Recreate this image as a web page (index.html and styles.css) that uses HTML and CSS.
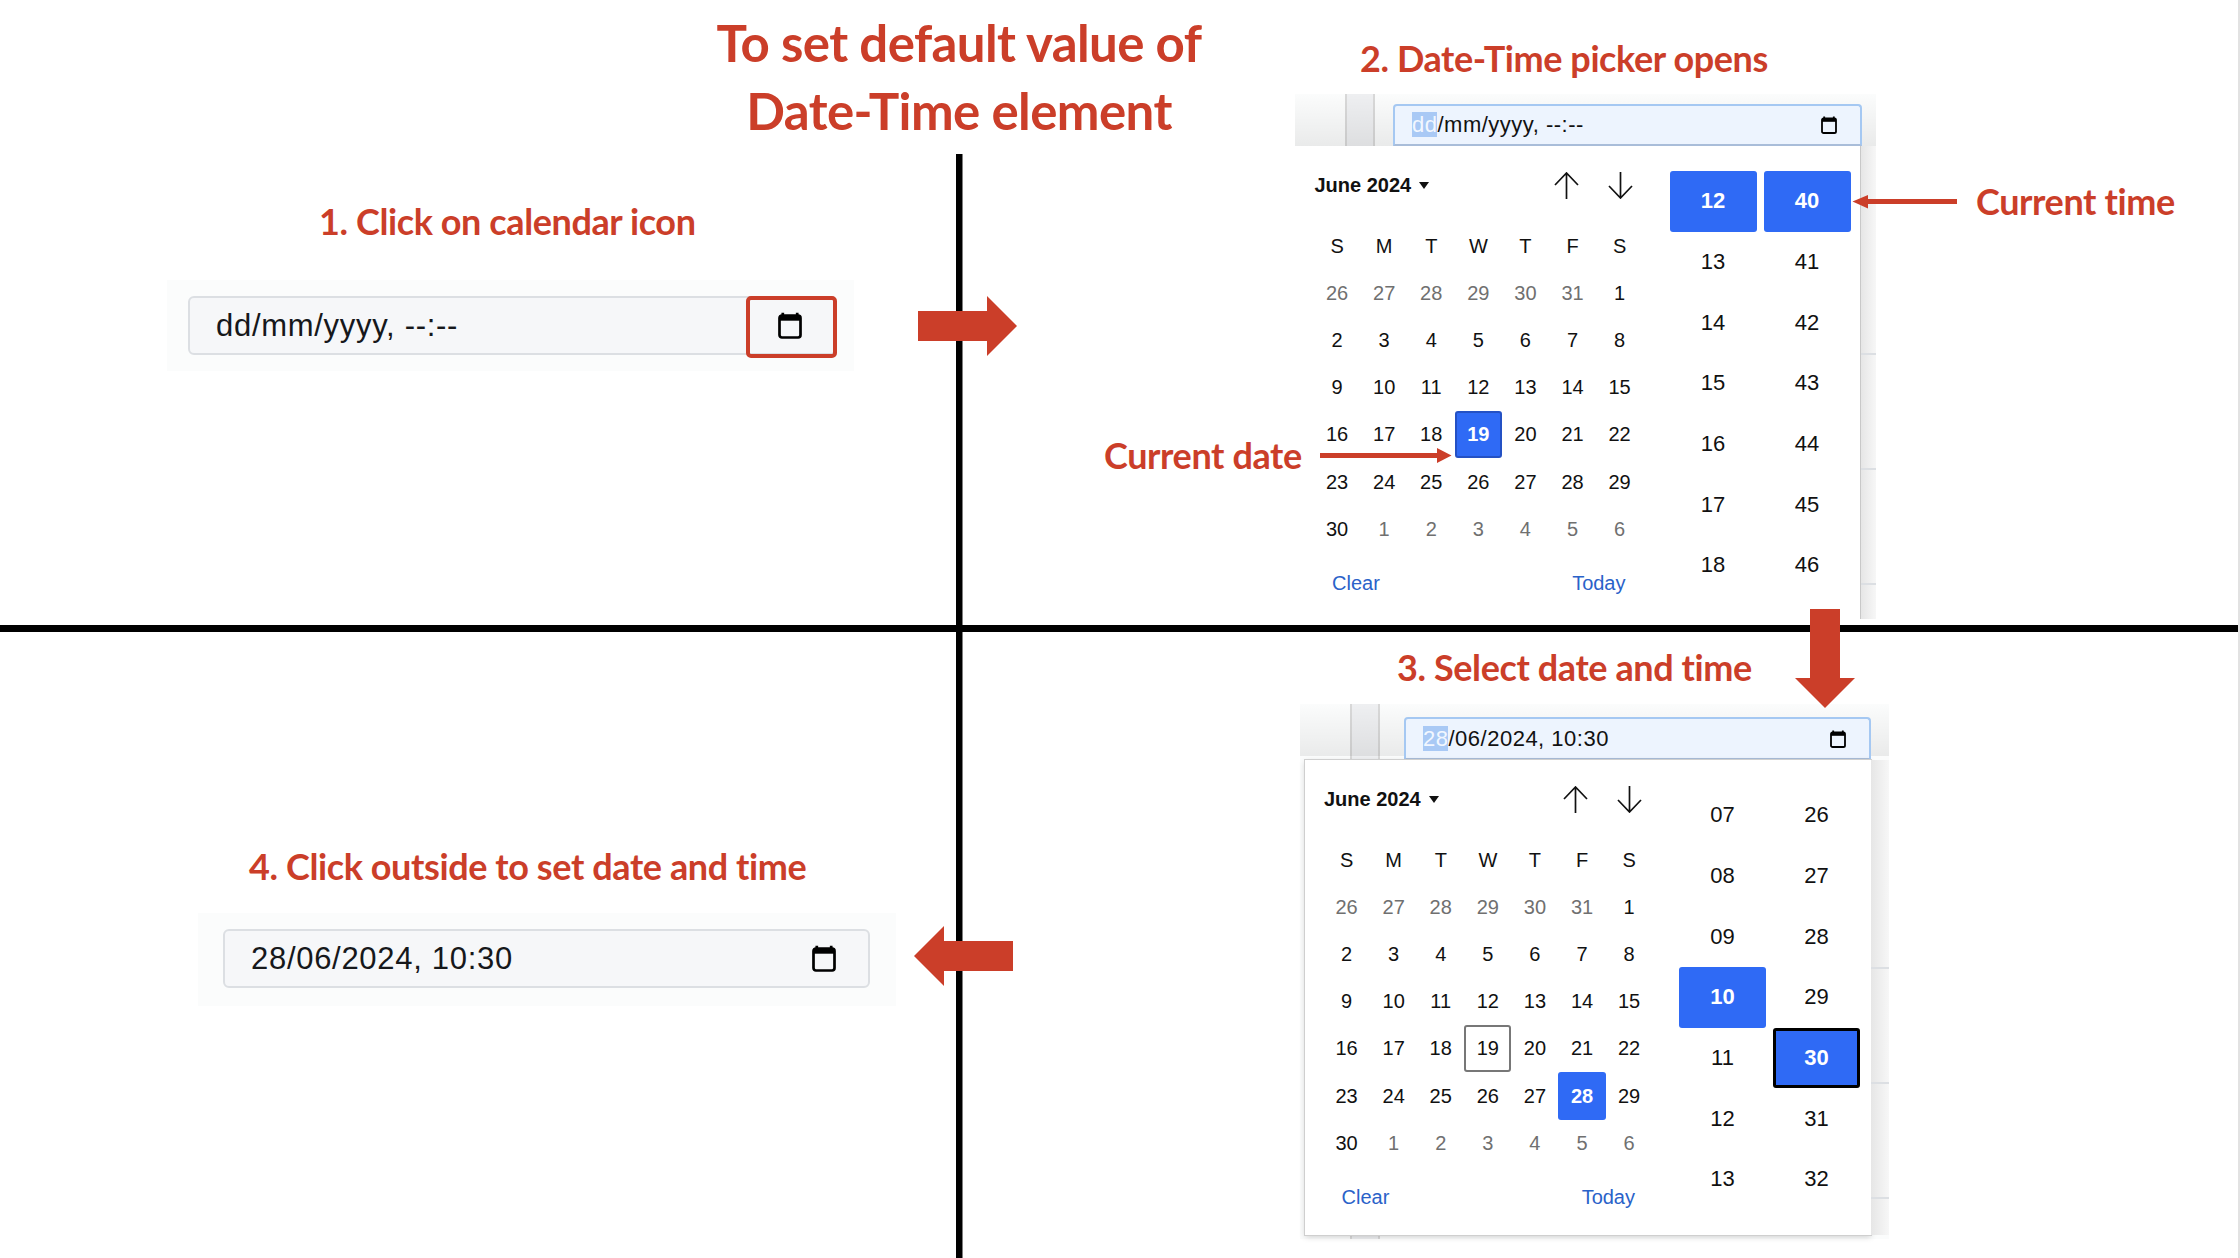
FILE: index.html
```html
<!DOCTYPE html>
<html lang="en">
<head>
    <meta charset="UTF-8">
    <title>To set default value of Date-Time element</title>
    <meta name="viewport" content="width=device-width, initial-scale=1.0">
    <link rel="stylesheet" href="styles.css">
</head>
<body>
<svg class="defs" width="0" height="0">
    <symbol id="cal" viewBox="0 0 16 18">
        <path d="M3.2 0.5v3M12.8 0.5v3" stroke="currentColor" stroke-width="1.8" fill="none"/>
        <rect x="1" y="2.4" width="14" height="14.6" rx="1.6" stroke="currentColor" stroke-width="1.8" fill="none"/>
        <rect x="1" y="2.4" width="14" height="3.4" fill="currentColor"/>
    </symbol>
    <symbol id="up" viewBox="0 0 25 27">
        <path d="M12.5 27V1M1 13L12.5 1L24 13" stroke="currentColor" stroke-width="1.7" fill="none"/>
    </symbol>
    <symbol id="down" viewBox="0 0 25 27">
        <path d="M12.5 0V26M1 14L12.5 26L24 14" stroke="currentColor" stroke-width="1.7" fill="none"/>
    </symbol>
</svg>

<main class="slide">
    <h1 class="title">To set default value of<br>Date-Time element</h1>

    <!-- step 1 -->
    <h2 class="label step-1">1. Click on calendar icon</h2>
    <div class="field-wrap wrap-1">
        <div class="field">
            <span class="field-text">dd/mm/yyyy, --:--</span>
            <svg class="field-icon"><use href="#cal"/></svg>
        </div>
        <div class="icon-mark"></div>
    </div>

    <!-- step 2 -->
    <h2 class="label step-2">2. Date-Time picker opens</h2>
    <div class="shot shot-1">
        <div class="date-input">
            <span><span class="sel">dd</span>/mm/yyyy, --:--</span>
            <svg class="input-icon"><use href="#cal"/></svg>
        </div>
        <div class="shot-row">
            <div class="picker">
                <div class="cal">
                    <div class="cal-head">
                        <span class="month">June 2024<i class="caret"></i></span>
                        <svg class="nav"><use href="#up"/></svg>
                        <svg class="nav"><use href="#down"/></svg>
                    </div>
                    <div class="days">
                        <b>S</b><b>M</b><b>T</b><b>W</b><b>T</b><b>F</b><b>S</b>
                        <span class="off">26</span><span class="off">27</span><span class="off">28</span><span class="off">29</span><span class="off">30</span><span class="off">31</span><span>1</span>
                        <span>2</span><span>3</span><span>4</span><span>5</span><span>6</span><span>7</span><span>8</span>
                        <span>9</span><span>10</span><span>11</span><span>12</span><span>13</span><span>14</span><span>15</span>
                        <span>16</span><span>17</span><span>18</span><span class="today-focus">19</span><span>20</span><span>21</span><span>22</span>
                        <span>23</span><span>24</span><span>25</span><span>26</span><span>27</span><span>28</span><span>29</span>
                        <span>30</span><span class="off">1</span><span class="off">2</span><span class="off">3</span><span class="off">4</span><span class="off">5</span><span class="off">6</span>
                    </div>
                    <div class="cal-foot"><a>Clear</a><a>Today</a></div>
                </div>
                <div class="times">
                    <span class="on">12</span><span class="on">40</span>
                    <span>13</span><span>41</span>
                    <span>14</span><span>42</span>
                    <span>15</span><span>43</span>
                    <span>16</span><span>44</span>
                    <span>17</span><span>45</span>
                    <span>18</span><span>46</span>
                </div>
            </div>
            <div class="strip"></div>
        </div>
    </div>
    <h2 class="label note-time">Current time</h2>
    <h2 class="label note-date">Current date</h2>

    <!-- step 3 -->
    <h2 class="label step-3">3. Select date and time</h2>
    <div class="shot shot-2">
        <div class="date-input">
            <span><span class="sel">28</span>/06/2024, 10:30</span>
            <svg class="input-icon"><use href="#cal"/></svg>
        </div>
        <div class="shot-row">
            <div class="picker">
                <div class="cal">
                    <div class="cal-head">
                        <span class="month">June 2024<i class="caret"></i></span>
                        <svg class="nav"><use href="#up"/></svg>
                        <svg class="nav"><use href="#down"/></svg>
                    </div>
                    <div class="days">
                        <b>S</b><b>M</b><b>T</b><b>W</b><b>T</b><b>F</b><b>S</b>
                        <span class="off">26</span><span class="off">27</span><span class="off">28</span><span class="off">29</span><span class="off">30</span><span class="off">31</span><span>1</span>
                        <span>2</span><span>3</span><span>4</span><span>5</span><span>6</span><span>7</span><span>8</span>
                        <span>9</span><span>10</span><span>11</span><span>12</span><span>13</span><span>14</span><span>15</span>
                        <span>16</span><span>17</span><span>18</span><span class="today">19</span><span>20</span><span>21</span><span>22</span>
                        <span>23</span><span>24</span><span>25</span><span>26</span><span>27</span><span class="picked">28</span><span>29</span>
                        <span>30</span><span class="off">1</span><span class="off">2</span><span class="off">3</span><span class="off">4</span><span class="off">5</span><span class="off">6</span>
                    </div>
                    <div class="cal-foot"><a>Clear</a><a>Today</a></div>
                </div>
                <div class="times">
                    <span>07</span><span>26</span>
                    <span>08</span><span>27</span>
                    <span>09</span><span>28</span>
                    <span class="on">10</span><span>29</span>
                    <span>11</span><span class="on focus">30</span>
                    <span>12</span><span>31</span>
                    <span>13</span><span>32</span>
                </div>
            </div>
            <div class="strip"></div>
        </div>
    </div>

    <!-- step 4 -->
    <h2 class="label step-4">4. Click outside to set date and time</h2>
    <div class="field-wrap wrap-4">
        <div class="field">
            <span class="field-text">28/06/2024, 10:30</span>
            <svg class="field-icon"><use href="#cal"/></svg>
        </div>
    </div>

    <!-- divider lines and red arrows drawn over everything -->
    <svg class="marks" viewBox="0 0 2240 1258">
        <rect class="ink" x="956" y="154" width="6.5" height="1104"/>
        <rect class="ink" x="0" y="625" width="2240" height="7"/>
        <polygon class="red" points="918,311 987,311 987,296 1017,326 987,356 987,341 918,341"/>
        <polygon class="red" points="1013,941 944,941 944,926 914,956 944,986 944,971 1013,971"/>
        <polygon class="red" points="1810,609 1840,609 1840,678 1855,678 1825,708 1795,678 1810,678"/>
        <polygon class="red" points="1957,199 1868,199 1868,195 1852.5,201.5 1868,208.5 1868,204 1957,204"/>
        <polygon class="red" points="1320,453 1437,453 1437,448 1451.5,455.5 1437,463 1437,458 1320,458"/>
    </svg>
    <div class="edge"></div>
</main>
</body>
</html>
```

FILE: styles.css
```css
* {
    box-sizing: border-box;
}
body {
    margin: 0;
    background: #fff;
    font-family: "Liberation Sans", Arial, sans-serif;
    color: #111;
}
.defs {
    position: absolute;
}
.slide {
    position: relative;
    width: 2240px;
    height: 1258px;
    overflow: hidden;
}
.marks {
    position: absolute;
    left: 0;
    top: 0;
    width: 2240px;
    height: 1258px;
}
.ink {
    fill: #000;
}
.red {
    fill: #cb3e29;
}
.edge {
    position: absolute;
    right: 0;
    top: 0;
    width: 2px;
    height: 100%;
    background: #e2e2e2;
}

/* headings */
.title {
    position: absolute;
    left: 559px;
    top: 9px;
    width: 800px;
    margin: 0;
    text-align: center;
    font: 700 51px/68px Lato, "Open Sans", sans-serif;
    letter-spacing: -0.6px;
    color: #cb3e29;
}
.label {
    position: absolute;
    margin: 0;
    white-space: nowrap;
    font: 700 36px/44px Lato, "Open Sans", sans-serif;
    letter-spacing: -0.4px;
    color: #cb3e29;
}
.step-1 { left: 319px; top: 199px; }
.step-2 { left: 1360px; top: 36px; }
.step-3 { left: 1397px; top: 645px; }
.step-4 { left: 249px; top: 844px; }
.note-time { left: 1976px; top: 179px; }
.note-date { left: 1104px; top: 433px; }

/* the plain inputs on the left */
.field-wrap {
    position: absolute;
    background: #fbfcfc;
}
.wrap-1 {
    left: 167px;
    top: 280px;
    width: 687px;
    height: 91px;
    padding: 16px 18px 16px 21px;
}
.wrap-4 {
    left: 198px;
    top: 913px;
    width: 698px;
    height: 93px;
    padding: 16px 26px 18px 25px;
}
.field {
    display: flex;
    align-items: center;
    justify-content: space-between;
    height: 59px;
    padding: 0 32px 0 26px;
    background: #f6f7f9;
    border: 2px solid #dcdfe3;
    border-radius: 6px;
}
.wrap-1 .field {
    padding-right: 32px;
}
.field-text {
    font-size: 31px;
    letter-spacing: 0.7px;
    color: #16181b;
}
.field-icon {
    width: 24px;
    height: 27px;
    color: #000;
}
.icon-mark {
    position: absolute;
    left: 579px;
    top: 16px;
    width: 91px;
    height: 62px;
    border: 4px solid #cb3e29;
    border-radius: 5px;
}

/* screenshots of the open picker */
.shot {
    position: absolute;
    background:
        linear-gradient(transparent, rgba(0, 0, 0, 0.07)) 0 0 / 100% 52px no-repeat,
        linear-gradient(90deg, #d8d8d8 0 2px, #eeeff1 2px 28px, #d8d8d8 28px 30px) 50px 0 / 30px 100% no-repeat,
        #fbfcfc;
}
.shot-1 {
    left: 1295px;
    top: 94px;
    width: 581px;
    height: 525px;
    padding-top: 10px;
}
.shot-2 {
    left: 1300px;
    top: 704px;
    width: 589px;
    height: 535px;
    padding-top: 13px;
}
.date-input {
    display: flex;
    align-items: center;
    justify-content: space-between;
    height: 42px;
    padding: 0 23px 0 17px;
    background: #edf4fe;
    border: 2px solid #a5c8f2;
    border-bottom-color: #a9bdd9;
    border-radius: 4px 4px 0 0;
    font-size: 22px;
    letter-spacing: 0.5px;
}
.shot-1 .date-input {
    width: 469px;
    margin-left: 98px;
}
.shot-2 .date-input {
    width: 467px;
    height: 43px;
    margin-left: 104px;
}
.sel {
    background: #a9c9f5;
    color: #f2f7ff;
}
.input-icon {
    width: 16px;
    height: 18px;
    color: #000;
}
.shot-row {
    display: flex;
}
.shot-2 .shot-row {
    padding-left: 4.5px;
}
.picker {
    display: flex;
    gap: 26px;
    flex: none;
    width: 566px;
    height: 473px;
    padding: 25px 0 0 18.5px;
    background: #fff;
    border-right: 1px solid #c8c8c8;
}
.shot-2 .picker {
    height: 475px;
    border-right: 0;
    box-shadow: 0 0 0 1px #cfcfcf, 0 2px 6px rgba(0, 0, 0, 0.18);
}
.strip {
    flex: 1;
    background:
        linear-gradient(#dcdfe3, #dcdfe3) 0 92px / 100% 2px no-repeat,
        linear-gradient(#dcdfe3, #dcdfe3) 0 207px / 100% 2px no-repeat,
        linear-gradient(#dcdfe3, #dcdfe3) 0 322px / 100% 2px no-repeat,
        linear-gradient(#dcdfe3, #dcdfe3) 0 437px / 100% 2px no-repeat,
        linear-gradient(90deg, #e6e6e6, #f7f7f7);
}
.shot-1 .strip {
    background-position: 0 -1000px, 0 207px, 0 322px, 0 437px, 0 0;
}
.shot-2 .strip {
    background-position: 0 -1000px, 0 207px, 0 322px, 0 437px, 0 0;
    background-color: #fbfcfc;
}

/* calendar half */
.cal {
    width: 330px;
    flex: none;
}
.cal-head {
    display: flex;
    align-items: center;
    height: 28px;
    margin: 0 0 24px;
}
.month {
    flex: 1;
    display: flex;
    align-items: center;
    padding-left: 1px;
    font-size: 20px;
    font-weight: 700;
}
.caret {
    width: 0;
    height: 0;
    margin-left: 8px;
    border: 5.5px solid transparent;
    border-top: 7px solid #111;
    border-bottom: 0;
}
.nav {
    width: 25px;
    height: 27px;
    margin-right: 29px;
    color: #111;
}
.nav:last-child {
    margin-right: 11px;
}
.days {
    display: grid;
    grid-template-columns: repeat(7, 47.1px);
    grid-auto-rows: 47.1px;
    font-size: 20px;
}
.days b,
.days span {
    display: flex;
    align-items: center;
    justify-content: center;
    font-weight: 400;
}
.days .off {
    color: #707070;
}
.days .today-focus {
    background: #2f6af5;
    border: 2px solid #2451c4;
    border-radius: 3px;
    color: #fff;
    font-weight: 700;
}
.days .today {
    border: 2px solid #777;
    border-radius: 3px;
}
.days .picked {
    background: #2f6af5;
    border-radius: 3px;
    color: #fff;
    font-weight: 700;
}
.cal-foot {
    display: flex;
    justify-content: space-between;
    height: 40px;
    margin-top: 11px;
    padding: 0 18px 0 18.5px;
    align-items: center;
    font-size: 20px;
    color: #2a62c9;
}

/* hour and minute columns */
.times {
    display: grid;
    grid-template-columns: 87px 87px;
    grid-auto-rows: 60.7px;
    column-gap: 7px;
    font-size: 22px;
    height: 425px;
}
.times span {
    display: flex;
    align-items: center;
    justify-content: center;
}
.times .on {
    background: #2f6af5;
    border-radius: 3px;
    color: #fff;
    font-weight: 700;
}
.times .focus {
    border: 3px solid #000;
}
```
